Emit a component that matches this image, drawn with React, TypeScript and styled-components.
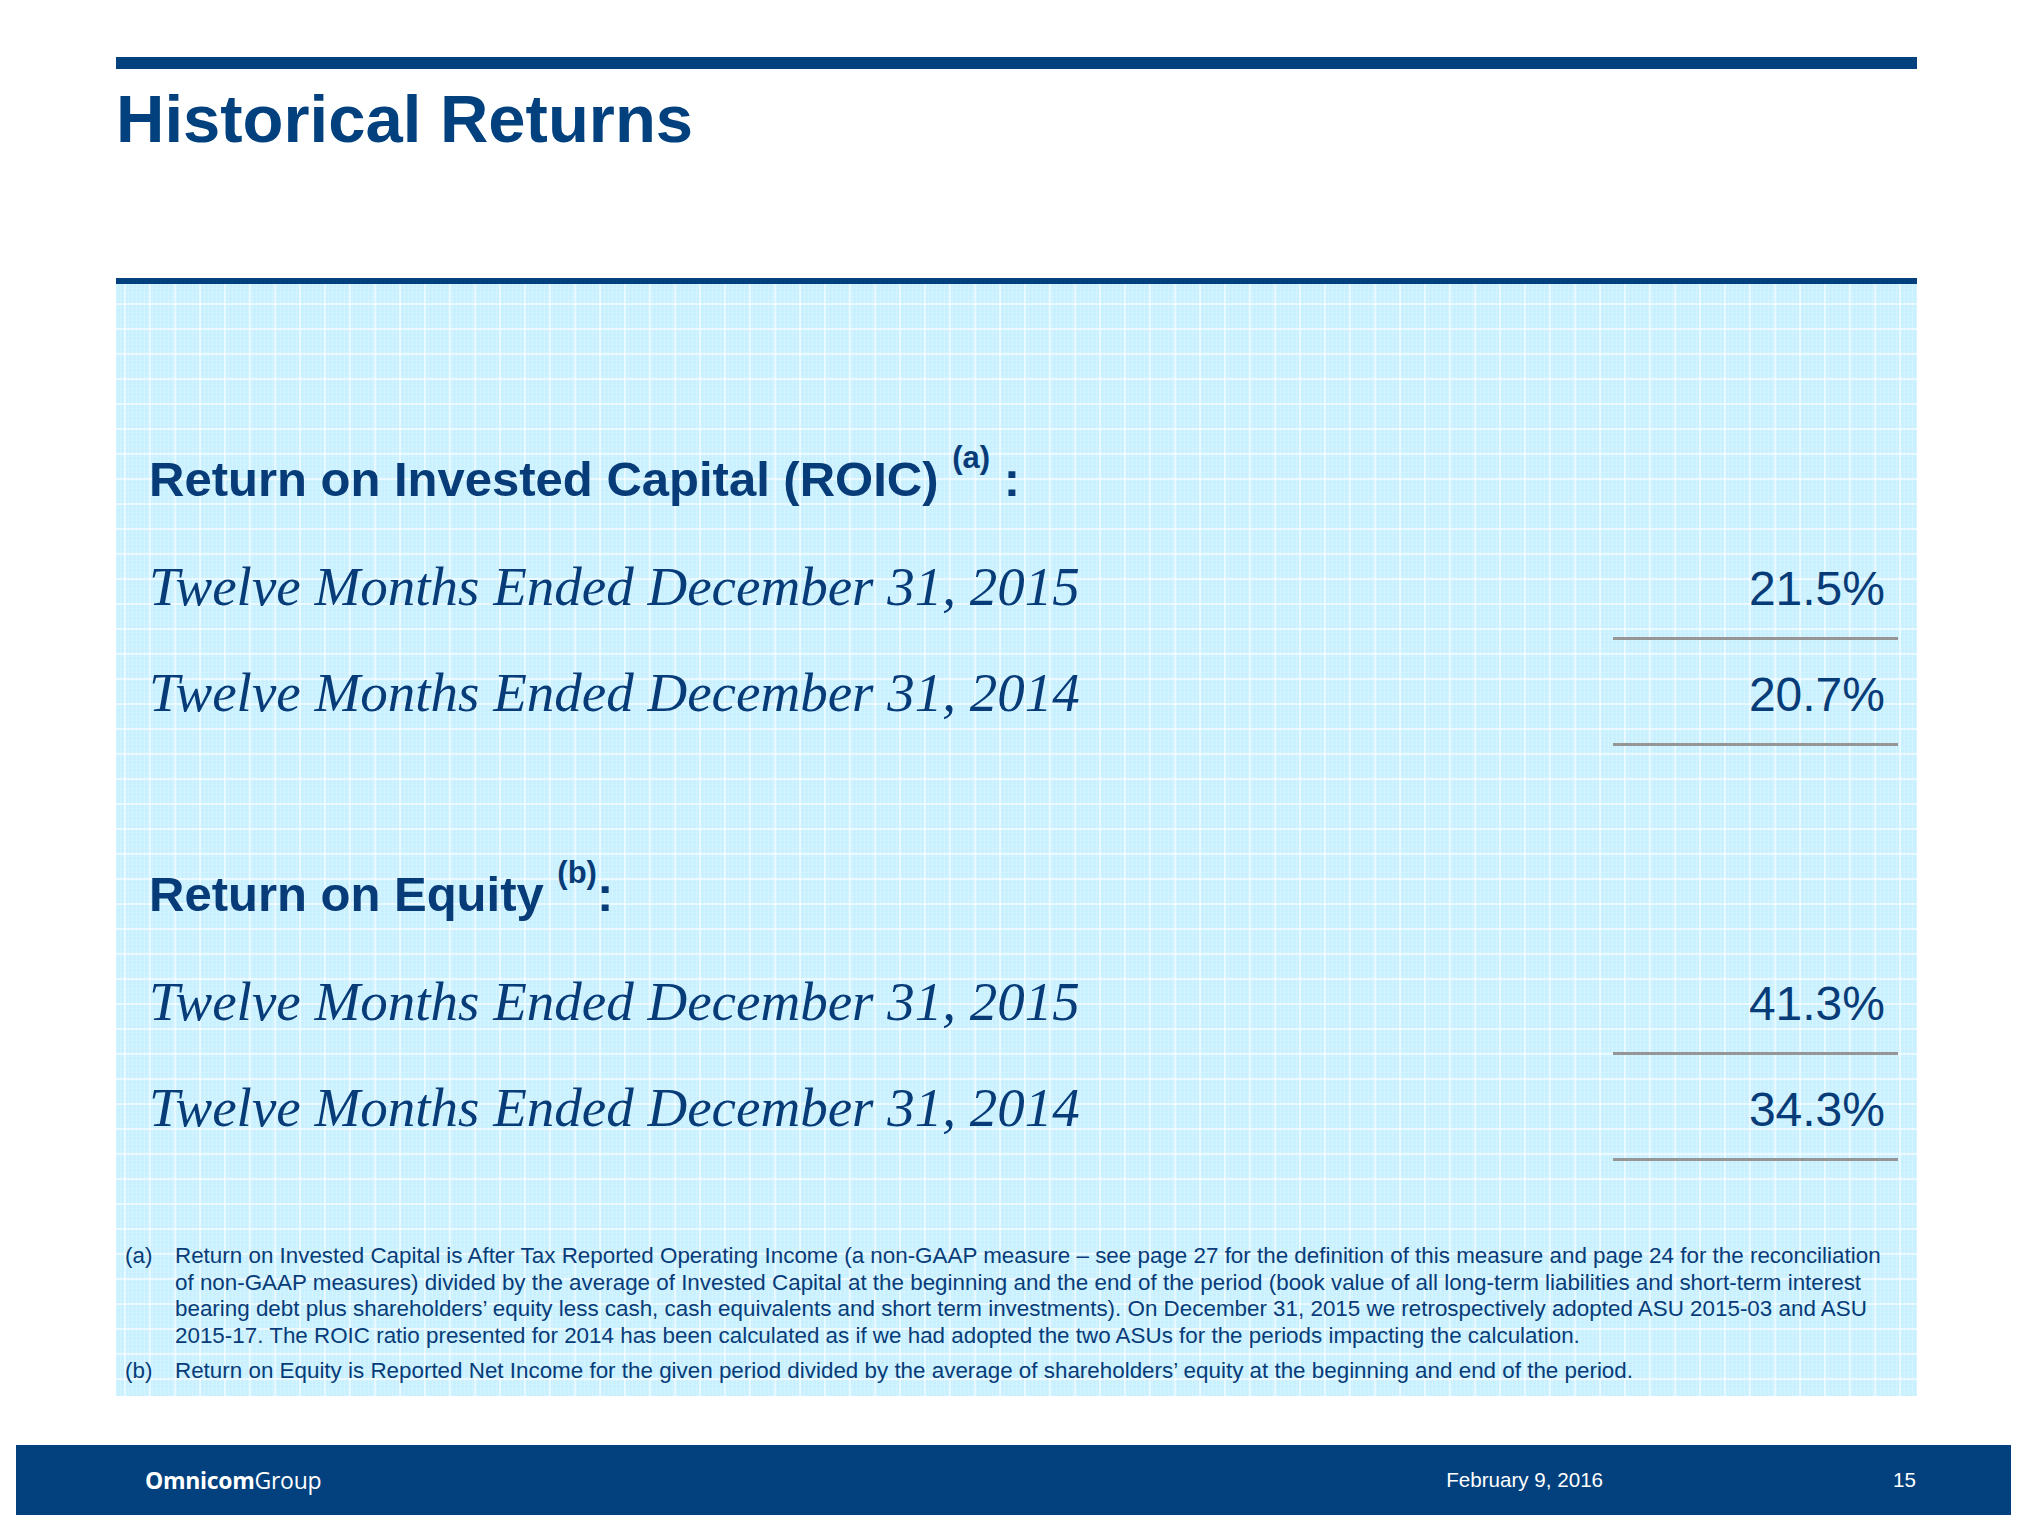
import { FC } from 'react';
import styled, { createGlobalStyle } from 'styled-components';

const NAVY = '#02417e';
const INK = '#073c78';

const GlobalStyle = createGlobalStyle`
  html, body {
    margin: 0;
    padding: 0;
    background: #ffffff;
  }
  body {
    width: 2027px;
    height: 1534px;
    overflow: hidden;
  }
`;

interface Row {
  label: string,
  value: string,
};

const roic: Row[] = [
  { label: 'Twelve Months Ended December 31, 2015', value: '21.5%' },
  { label: 'Twelve Months Ended December 31, 2014', value: '20.7%' },
];

const roe: Row[] = [
  { label: 'Twelve Months Ended December 31, 2015', value: '41.3%' },
  { label: 'Twelve Months Ended December 31, 2014', value: '34.3%' },
];

const noteA = [
  'Return on Invested Capital is After Tax Reported Operating Income (a non-GAAP measure \u2013 see page 27 for the definition of this measure and page 24 for the reconciliation',
  'of non-GAAP measures) divided by the average of Invested Capital at the beginning and the end of the period (book value of all long-term liabilities and short-term interest',
  'bearing debt plus shareholders\u2019 equity less cash, cash equivalents and short term investments). On December 31, 2015 we retrospectively adopted ASU 2015-03 and ASU',
  '2015-17. The ROIC ratio presented for 2014 has been calculated as if we had adopted the two ASUs for the periods impacting the calculation.',
];

const noteB = [
  'Return on Equity is Reported Net Income for the given period divided by the average of shareholders\u2019 equity at the beginning and end of the period.',
];

const Returns: FC = () => {
  return (
    <Slide>
      <GlobalStyle />
      <TopRule />
      <Title>Historical Returns</Title>

      <Panel>
        <Section>
          <Heading>
            Return on Invested Capital (ROIC) <Sup>(a)</Sup> :
          </Heading>
          {roic.map((r) => (
            <DataRow key={r.label + r.value}>
              <Label>{r.label}</Label>
              <Value>{r.value}</Value>
            </DataRow>
          ))}
        </Section>

        <Section $gap={119}>
          <Heading>
            Return on Equity <Sup>(b)</Sup>:
          </Heading>
          {roe.map((r) => (
            <DataRow key={r.label + r.value}>
              <Label>{r.label}</Label>
              <Value>{r.value}</Value>
            </DataRow>
          ))}
        </Section>

        <Notes>
          <Note>
            <Marker>(a)</Marker>
            <NoteText>
              {noteA.map((line) => <NoteLine key={line}>{line}</NoteLine>)}
            </NoteText>
          </Note>
          <Note $gap={9}>
            <Marker>(b)</Marker>
            <NoteText>
              {noteB.map((line) => <NoteLine key={line}>{line}</NoteLine>)}
            </NoteText>
          </Note>
        </Notes>
      </Panel>

      <Footer>
        <Logo><b>Omnicom</b>Group</Logo>
        <FooterDate>February 9, 2016</FooterDate>
        <PageNo>15</PageNo>
      </Footer>
    </Slide>
  );
};

const Slide = styled.div`
  width: 2027px;
  height: 1534px;
  display: flex;
  flex-direction: column;
  font-family: "Liberation Sans", Arial, sans-serif;
  color: ${INK};
`;
const TopRule = styled.div`
  margin: 57px 0 0 116px;
  width: 1801px;
  height: 12px;
  background: ${NAVY};
`;
const Title = styled.h1`
  margin: 17px 0 0 116px;
  font-size: 67px;
  line-height: 66px;
  font-weight: 700;
  color: ${NAVY};
`;
const Panel = styled.div`
  margin: 126px 0 0 116px;
  width: 1801px;
  height: 1118px;
  box-sizing: border-box;
  border-top: 6px solid ${NAVY};
  padding: 165px 19px 0 33px;
  display: flex;
  flex-direction: column;
  background-color: #c8f0fe;
  background-image:
    linear-gradient(to bottom, rgba(255, 255, 255, 0.6) 2px, transparent 2px),
    linear-gradient(to right, rgba(255, 255, 255, 0.55) 2px, transparent 2px),
    repeating-linear-gradient(to right, rgba(255, 255, 255, 0.2) 0 1px, transparent 1px 4px),
    repeating-linear-gradient(to bottom, rgba(255, 255, 255, 0.1) 0 1px, transparent 1px 4px);
  background-size: 100% 25px, 25px 100%, auto, auto;
  background-position: 0 19px, 8px 0, 0 0, 0 0;
`;
const Section = styled.div<{ $gap?: number }>`
  display: flex;
  flex-direction: column;
  margin-top: ${(p) => p.$gap ?? 0}px;
`;
const Heading = styled.div`
  font-size: 49px;
  line-height: 60px;
  font-weight: 700;
  margin-bottom: 24px;
  white-space: nowrap;
`;
const Sup = styled.span`
  font-size: 31px;
  line-height: 0;
  vertical-align: 28px;
`;
const DataRow = styled.div`
  height: 106px;
  box-sizing: border-box;
  padding-top: 27px;
  display: flex;
  align-items: baseline;
  justify-content: space-between;
`;
const Label = styled.div`
  font-family: "Liberation Serif", "Times New Roman", serif;
  font-style: italic;
  font-size: 55px;
  line-height: 54px;
  white-space: nowrap;
`;
const Value = styled.div`
  width: 285px;
  box-sizing: border-box;
  padding: 0 13px 24px 0;
  border-bottom: 3px solid #969696;
  text-align: right;
  font-size: 48px;
  line-height: 48px;
`;
const Notes = styled.div`
  margin: 83px 0 0 -24px;
  display: flex;
  flex-direction: column;
  font-size: 22.4px;
  line-height: 26.5px;
`;
const Note = styled.div<{ $gap?: number }>`
  display: flex;
  margin-top: ${(p) => p.$gap ?? 0}px;
`;
const Marker = styled.div`
  width: 50px;
  flex: none;
`;
const NoteText = styled.div`
  display: flex;
  flex-direction: column;
`;
const NoteLine = styled.span`
  white-space: nowrap;
`;
const Footer = styled.div`
  margin: 49px 0 0 16px;
  width: 1995px;
  height: 70px;
  box-sizing: border-box;
  padding: 0 95px 0 129px;
  display: flex;
  align-items: center;
  background: ${NAVY};
  color: #ffffff;
`;
const Logo = styled.div`
  font-family: "Open Sans", "Noto Sans", sans-serif;
  font-size: 23px;
  letter-spacing: -0.3px;
  b {
    font-weight: 700;
  }
`;
const FooterDate = styled.div`
  margin-left: auto;
  font-size: 20.6px;
`;
const PageNo = styled.div`
  margin-left: 290px;
  font-size: 20.6px;
`;

export default Returns;
